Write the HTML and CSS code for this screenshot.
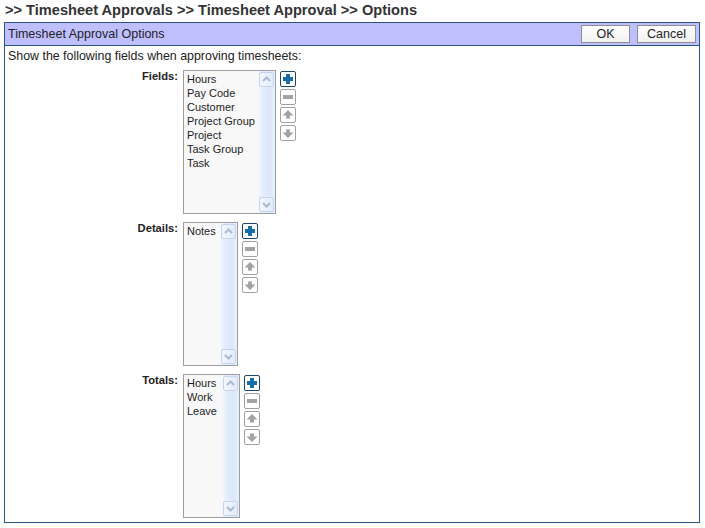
FILE: index.html
```html
<!DOCTYPE html>
<html>
<head>
<meta charset="utf-8">
<title>Timesheet Approval Options</title>
<link rel="stylesheet" href="styles.css">
</head>
<body>
<h1 class="crumb">&gt;&gt; Timesheet Approvals &gt;&gt; Timesheet Approval &gt;&gt; Options</h1>
<div class="panel">
  <div class="panel-head">
    <span class="panel-title">Timesheet Approval Options</span>
    <div class="actions">
      <button class="btn btn-ok">OK</button>
      <button class="btn btn-cancel">Cancel</button>
    </div>
  </div>
  <div class="panel-body">
    <p class="intro">Show the following fields when approving timesheets:</p>

    <div class="row">
      <div class="lbl">Fields:</div>
      <div class="listbox lb-fields">
        <div class="items">
          <div class="item">Hours</div>
          <div class="item">Pay Code</div>
          <div class="item">Customer</div>
          <div class="item">Project Group</div>
          <div class="item">Project</div>
          <div class="item">Task Group</div>
          <div class="item">Task</div>
        </div>
        <div class="sb">
          <div class="sb-btn"><svg width="13" height="13" viewBox="0 0 13 13"><path d="M3 8 L6.5 4.5 L10 8" fill="none" stroke="#a9bad3" stroke-width="2"/></svg></div>
          <div class="sb-btn"><svg width="13" height="13" viewBox="0 0 13 13"><path d="M3 5 L6.5 8.5 L10 5" fill="none" stroke="#a9bad3" stroke-width="2"/></svg></div>
        </div>
      </div>
      <div class="tools">
        <div class="tool tool-add"><svg width="14" height="14" viewBox="0 0 14 14"><path d="M5 2h4v3h3v4h-3v3h-4v-3h-3v-4h3z" fill="#176ea6"/></svg></div>
        <div class="tool"><svg width="14" height="14" viewBox="0 0 14 14"><rect x="2" y="5" width="10" height="4" fill="#a3a3a3"/></svg></div>
        <div class="tool"><svg width="14" height="14" viewBox="0 0 14 14"><polygon points="7,2 12.5,7.5 9,7.5 9,10.5 5,10.5 5,7.5 1.5,7.5" fill="#a3a3a3"/></svg></div>
        <div class="tool"><svg width="14" height="14" viewBox="0 0 14 14"><polygon points="7,12 12.5,6.5 9,6.5 9,3.5 5,3.5 5,6.5 1.5,6.5" fill="#a3a3a3"/></svg></div>
      </div>
    </div>

    <div class="row">
      <div class="lbl">Details:</div>
      <div class="listbox lb-details">
        <div class="items">
          <div class="item">Notes</div>
        </div>
        <div class="sb">
          <div class="sb-btn"><svg width="13" height="13" viewBox="0 0 13 13"><path d="M3 8 L6.5 4.5 L10 8" fill="none" stroke="#a9bad3" stroke-width="2"/></svg></div>
          <div class="sb-btn"><svg width="13" height="13" viewBox="0 0 13 13"><path d="M3 5 L6.5 8.5 L10 5" fill="none" stroke="#a9bad3" stroke-width="2"/></svg></div>
        </div>
      </div>
      <div class="tools">
        <div class="tool tool-add"><svg width="14" height="14" viewBox="0 0 14 14"><path d="M5 2h4v3h3v4h-3v3h-4v-3h-3v-4h3z" fill="#176ea6"/></svg></div>
        <div class="tool"><svg width="14" height="14" viewBox="0 0 14 14"><rect x="2" y="5" width="10" height="4" fill="#a3a3a3"/></svg></div>
        <div class="tool"><svg width="14" height="14" viewBox="0 0 14 14"><polygon points="7,2 12.5,7.5 9,7.5 9,10.5 5,10.5 5,7.5 1.5,7.5" fill="#a3a3a3"/></svg></div>
        <div class="tool"><svg width="14" height="14" viewBox="0 0 14 14"><polygon points="7,12 12.5,6.5 9,6.5 9,3.5 5,3.5 5,6.5 1.5,6.5" fill="#a3a3a3"/></svg></div>
      </div>
    </div>

    <div class="row">
      <div class="lbl">Totals:</div>
      <div class="listbox lb-totals">
        <div class="items">
          <div class="item">Hours</div>
          <div class="item">Work</div>
          <div class="item">Leave</div>
        </div>
        <div class="sb">
          <div class="sb-btn"><svg width="13" height="13" viewBox="0 0 13 13"><path d="M3 8 L6.5 4.5 L10 8" fill="none" stroke="#a9bad3" stroke-width="2"/></svg></div>
          <div class="sb-btn"><svg width="13" height="13" viewBox="0 0 13 13"><path d="M3 5 L6.5 8.5 L10 5" fill="none" stroke="#a9bad3" stroke-width="2"/></svg></div>
        </div>
      </div>
      <div class="tools">
        <div class="tool tool-add"><svg width="14" height="14" viewBox="0 0 14 14"><path d="M5 2h4v3h3v4h-3v3h-4v-3h-3v-4h3z" fill="#176ea6"/></svg></div>
        <div class="tool"><svg width="14" height="14" viewBox="0 0 14 14"><rect x="2" y="5" width="10" height="4" fill="#a3a3a3"/></svg></div>
        <div class="tool"><svg width="14" height="14" viewBox="0 0 14 14"><polygon points="7,2 12.5,7.5 9,7.5 9,10.5 5,10.5 5,7.5 1.5,7.5" fill="#a3a3a3"/></svg></div>
        <div class="tool"><svg width="14" height="14" viewBox="0 0 14 14"><polygon points="7,12 12.5,6.5 9,6.5 9,3.5 5,3.5 5,6.5 1.5,6.5" fill="#a3a3a3"/></svg></div>
      </div>
    </div>
  </div>
</div>
</body>
</html>
```

FILE: styles.css
```css
* { box-sizing: border-box; }

body {
  margin: 0;
  background: #ffffff;
  color: #222222;
  font-family: "Liberation Sans", Arial, sans-serif;
}

.crumb {
  margin: 0;
  height: 22px;
  padding: 2px 0 0 5px;
  font-size: 14.6px;
  line-height: 17px;
  font-weight: bold;
  color: #333333;
}

.panel {
  margin-left: 4px;
  width: 696px;
  height: 501px;
  border: 1px solid #2a5583;
}

.panel-head {
  height: 23px;
  background: #bfbfff;
  border-bottom: 1px solid #2a5583;
  display: flex;
  align-items: center;
  justify-content: space-between;
  padding: 0 3px 0 3px;
}

.panel-title {
  font-size: 12.5px;
  color: #222;
}

.actions {
  display: flex;
  gap: 7px;
}

.btn {
  height: 18px;
  padding: 0;
  margin: 0;
  border: 1px solid #8e8e8e;
  background: linear-gradient(#ffffff, #f1f1f1);
  font-family: "Liberation Sans", Arial, sans-serif;
  font-size: 12.5px;
  color: #222;
  line-height: 16px;
}

.btn-ok { width: 49px; }
.btn-cancel { width: 59px; }

.panel-body {
  padding: 0 3px;
}

.intro {
  margin: 0;
  padding-top: 3px;
  height: 24px;
  font-size: 12.4px;
  line-height: 14px;
  color: #222;
}

.row {
  display: flex;
  align-items: flex-start;
  margin-bottom: 8px;
}

.lbl {
  width: 170px;
  margin-right: 5px;
  text-align: right;
  font-size: 11.2px;
  font-weight: bold;
  line-height: 12px;
  padding-top: 0;
  color: #222;
}

.listbox {
  height: 144px;
  border: 1px solid #9d9d9d;
  background: #f8f8f8;
  display: flex;
}

.lb-fields { width: 93px; }
.lb-details { width: 55px; }
.lb-totals { width: 57px; }

.items {
  flex: 1;
  padding: 1px 0 0 3px;
  font-size: 11px;
  line-height: 14px;
  color: #1e1e1e;
  white-space: nowrap;
  overflow: hidden;
}

.sb {
  width: 17px;
  display: flex;
  flex-direction: column;
  justify-content: space-between;
  padding: 1px;
  background: linear-gradient(to right, #f4f8fe, #e2ecfb 30%, #dbe7fa 70%, #eaf1fd);
}

.sb-btn {
  height: 15px;
  border: 1px solid #c6d5ee;
  border-radius: 2px;
  background: linear-gradient(to right, #f2f6fe, #e2ebfb);
  display: flex;
  align-items: center;
  justify-content: center;
}

.sb-btn svg { display: block; }

.tools {
  margin-left: 4px;
  margin-top: 1px;
  display: flex;
  flex-direction: column;
  gap: 2px;
}

.tool {
  width: 16px;
  height: 16px;
  border: 1px solid #a0a0a0;
  border-radius: 2px;
  background: #ffffff;
  display: flex;
  align-items: center;
  justify-content: center;
}

.tool svg { display: block; }

.tool-add {
  border-color: #1d466f;
}
```
